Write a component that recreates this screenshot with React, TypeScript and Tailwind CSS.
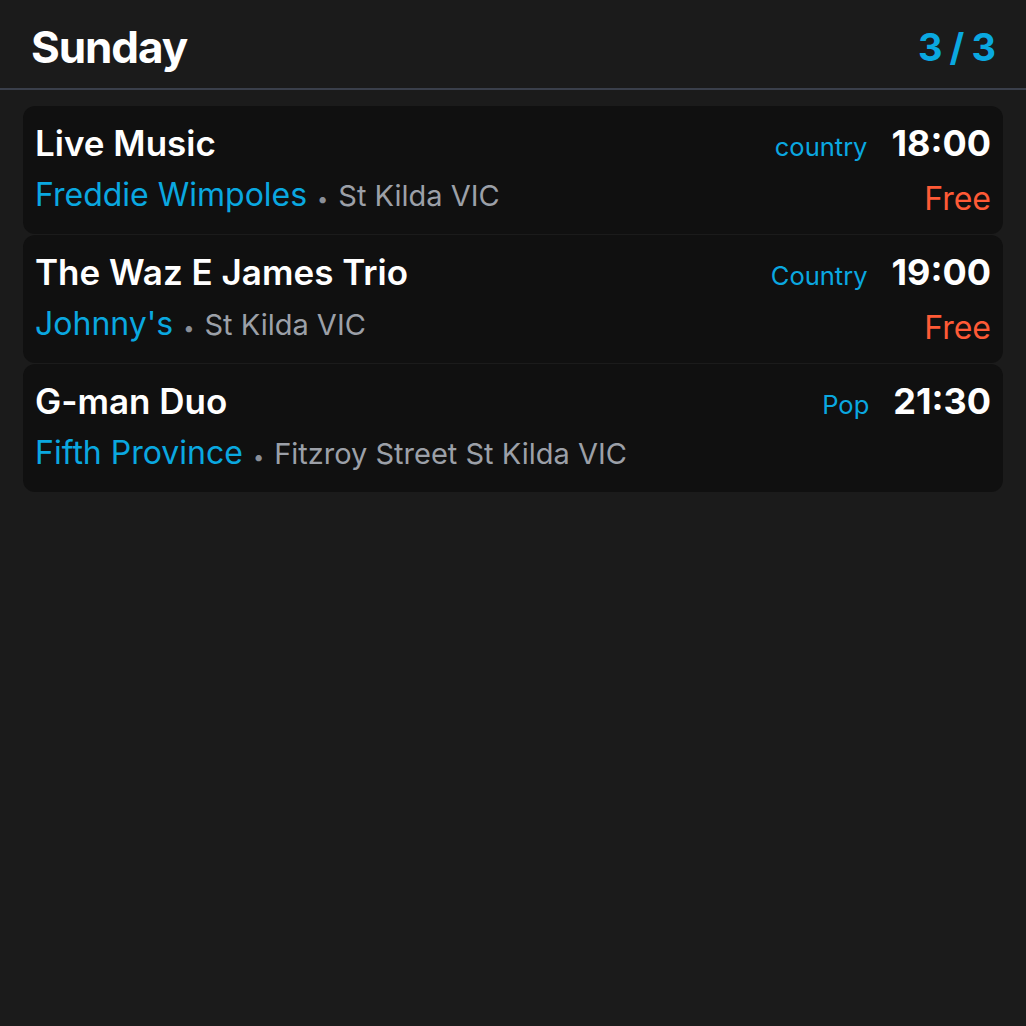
type Gig = {
  title: string;
  venue: string;
  location: string;
  genre: string;
  time: string;
  price?: string;
};

const gigs: Gig[] = [
  { title: "Live Music", venue: "Freddie Wimpoles", location: "St Kilda VIC", genre: "country", time: "18:00", price: "Free" },
  { title: "The Waz E James Trio", venue: "Johnny's", location: "St Kilda VIC", genre: "Country", time: "19:00", price: "Free" },
  { title: "G-man Duo", venue: "Fifth Province", location: "Fitzroy Street St Kilda VIC", genre: "Pop", time: "21:30" },
];

function GigCard({ gig }: { gig: Gig }) {
  return (
    <div className="h-[128px] rounded-xl bg-[#101010] px-3 pt-[15px] flex justify-between">
      <div className="flex flex-col">
        <div className="text-[35px] leading-[44px] font-semibold text-white">{gig.title}</div>
        <div className="mt-[8px] flex items-baseline leading-[44px]">
          <span className="text-[32px] text-[#0aa8e0]">{gig.venue}</span>
          <span className="mx-[10px] text-[20px] text-[#8a8f98]">•</span>
          <span className="text-[29px] text-[#9ca0a8]">{gig.location}</span>
        </div>
      </div>
      <div className="flex flex-col items-end">
        <div className="flex items-baseline gap-6 leading-[44px]">
          <span className="text-[25.5px] text-[#0aa8e0]">{gig.genre}</span>
          <span className="text-[36px] font-bold text-white">{gig.time}</span>
        </div>
        {gig.price && (
          <div className="mt-[8px] text-[32px] leading-[44px] text-[#ff5a36]">{gig.price}</div>
        )}
      </div>
    </div>
  );
}

export default function App() {
  return (
    <div className="min-h-[1026px] bg-[#1b1b1b]" style={{ fontFamily: "Inter, 'Noto Sans', sans-serif" }}>
      <div className="h-[90px] flex items-center justify-between pl-[31px] pr-[31px] pt-[6px] border-b-2 border-[#3a3f4b]">
        <h1 className="text-[44px] font-bold text-white tracking-tight">Sunday</h1>
        <span className="text-[38px] font-bold text-[#0aa8e0] tracking-tight">3 / 3</span>
      </div>
      <div className="px-[23px] pt-[16px] flex flex-col gap-px">
        {gigs.map((g) => (
          <GigCard key={g.title} gig={g} />
        ))}
      </div>
    </div>
  );
}
